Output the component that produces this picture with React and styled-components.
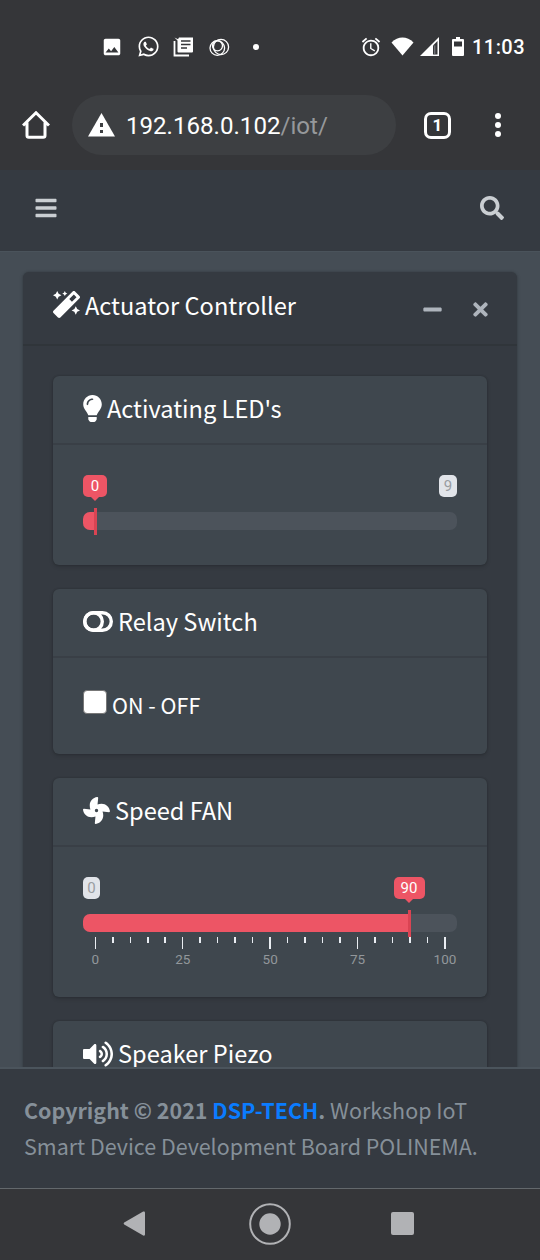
import React from "react";
import styled, { createGlobalStyle, css } from "styled-components";
import { FaBars, FaSearch, FaMinus, FaTimes, FaMagic, FaLightbulb, FaFan, FaVolumeUp, FaWhatsapp } from "react-icons/fa";
import { MdImage, MdAlarm } from "react-icons/md";

const GlobalStyle = createGlobalStyle`
  * { box-sizing: border-box; }
  body {
    margin: 0;
    background: #343a40;
    font-family: "Noto Sans CJK SC", "Noto Sans", sans-serif;
    color: #fff;
  }
  svg { display: block; flex: none; }
`;

const Screen = styled.div`
  width: 540px;
  height: 1260px;
  display: flex;
  flex-direction: column;
  overflow: hidden;
  background: #454d55;
`;

const StatusBar = styled.div`
  height: 95px;
  flex: none;
  display: flex;
  justify-content: space-between;
  align-items: center;
  padding: 0 15px 2px 101px;
  background: #353639;
`;

const Notifications = styled.div`
  display: flex;
  align-items: center;
  gap: 13.5px;
`;

const Dot = styled.i`
  width: 6px;
  height: 6px;
  margin-left: 9.5px;
  border-radius: 50%;
  background: #fff;
`;

const SystemIcons = styled.div`
  display: flex;
  align-items: center;
`;

const StatusIcon = styled.svg`
  margin-left: ${(p) => p.$gap}px;
`;

const Clock = styled.span`
  font: 500 20px/24px Roboto, sans-serif;
  letter-spacing: 0.45px;
  margin: 1px 0 0 8px;
`;

const AddressBar = styled.div`
  height: 75px;
  flex: none;
  display: flex;
  align-items: flex-start;
  padding-left: 22px;
  background: #353639;
`;

const BarIcon = styled.div`
  height: 60px;
  display: flex;
  align-items: center;
  margin-left: ${(p) => p.$gap || 0}px;
`;

const UrlField = styled.div`
  width: 324px;
  height: 60px;
  margin-left: 22px;
  padding-left: 16px;
  display: flex;
  align-items: center;
  border-radius: 30px;
  background: #3d3f42;
`;

const Url = styled.span`
  font: 400 24.1px/30px Roboto, sans-serif;
  margin: 2px 0 0 11px;
  white-space: nowrap;
  span { color: #96989b; }
`;

const TabCount = styled.div`
  width: 27px;
  height: 27px;
  border: 3px solid #fff;
  border-radius: 7px;
  display: flex;
  align-items: center;
  justify-content: center;
  font: 700 17px/20px Roboto, sans-serif;
`;

const Navbar = styled.nav`
  height: 82px;
  flex: none;
  display: flex;
  justify-content: space-between;
  align-items: flex-start;
  padding: 26px 36px 0 34px;
  color: #caced2;
  background: #353a41;
  border-bottom: 1px solid #4a535b;
`;

const Content = styled.main`
  flex: 1;
  min-height: 0;
  overflow: hidden;
  padding: 20px 23px 0;
`;

const OuterCard = styled.section`
  height: 900px;
  border-radius: 6px;
  background: #353a41;
  box-shadow: 0 0 2px rgba(0, 0, 0, 0.22), 0 1px 4px rgba(0, 0, 0, 0.15);
`;

const OuterHeader = styled.header`
  height: 74px;
  display: flex;
  justify-content: space-between;
  padding: 0 26px 0 30px;
  border-bottom: 2px solid #30353a;
`;

const Title = styled.h3`
  margin: 0;
  display: flex;
  height: 36px;
  font-size: 23.6px;
  font-weight: 400;
  line-height: 37px;
  white-space: nowrap;
  svg { margin-top: ${(p) => p.$iconTop || 0}px; margin-right: 5px; }
`;

const OuterTitle = styled(Title)`
  margin-top: 15px;
`;

const BulbIcon = styled(FaLightbulb)`
  width: 19px;
  height: 27px;
`;

const Tools = styled.div`
  display: flex;
  gap: 27px;
  color: #aeb4bc;
  padding-top: 27px;
`;

const CardList = styled.div`
  display: flex;
  flex-direction: column;
  gap: 24px;
  padding: 30px;
`;

const InnerCard = styled.article`
  height: ${(p) => p.$height}px;
  flex: none;
  border-radius: 6px;
  background: #3f474e;
  box-shadow: 0 0 2px rgba(0, 0, 0, 0.24), 0 2px 4px rgba(0, 0, 0, 0.14);
`;

const InnerHeader = styled.header`
  height: 69px;
  padding: 14px 30px 0;
  border-bottom: 2px solid #393f46;
`;

const CardBody = styled.div`
  padding: 30px;
`;

const Slider = styled.div`
  position: relative;
  padding-top: 37px;
`;

const Track = styled.div`
  height: 18px;
  border-radius: 7px;
  overflow: hidden;
  background: #4c535b;
`;

const Fill = styled.div`
  height: 18px;
  background: #ed5565;
`;

const Handle = styled.i`
  position: absolute;
  top: 33px;
  width: 3px;
  height: 27px;
  margin-left: -1px;
  background: #da4453;
`;

const tag = css`
  position: absolute;
  top: 0;
  height: 22px;
  border-radius: 5px;
  text-align: center;
  font: 400 15px/22px Roboto, sans-serif;
`;

const LimitTag = styled.span`
  ${tag}
  ${(p) => p.$side}: 0;
  width: ${(p) => (p.$side === "left" ? 17 : 18)}px;
  color: #999da1;
  background: #e1e4e9;
`;

const ValueTag = styled.span`
  ${tag}
  width: ${(p) => p.$width}px;
  margin-left: ${(p) => -p.$width / 2}px;
  color: #fff;
  background: #ed5565;
  &::after {
    content: "";
    position: absolute;
    top: 21px;
    left: 50%;
    margin-left: -5px;
    border: 5px solid transparent;
    border-bottom: 0;
    border-top-color: #ed5565;
  }
`;

const Ruler = styled.div`
  display: flex;
  justify-content: space-between;
  padding: 5px 12px 0 12.3px;
`;

const Tick = styled.div`
  width: 0;
  display: flex;
  flex-direction: column;
  align-items: center;
  font: 400 13.5px/16px Roboto, sans-serif;
  color: #92979b;
  &::before {
    content: "";
    flex: none;
    width: 1.5px;
    height: ${(p) => (p.$major ? 12 : 6)}px;
    margin-bottom: 2px;
    background: #e9edf2;
  }
`;

const CheckRow = styled.label`
  display: flex;
  height: 36px;
  font-size: 21.5px;
  line-height: 34px;
`;

const CheckBox = styled.input`
  appearance: none;
  width: 24px;
  height: 24px;
  margin: 2px 5px 0 0;
  border: 1.5px solid #777;
  border-radius: 4px;
  background: #fff;
`;

const Footer = styled.footer`
  height: 122px;
  flex: none;
  padding: 23px 24px 0;
  border-top: 2px solid #4b545c;
  border-bottom: 1px solid #63686c;
  background: #353a41;
  color: #869099;
  font-size: 21.46px;
  line-height: 36px;
`;

const FooterLine = styled.div`
  white-space: nowrap;
  b { font-weight: 700; }
  a { color: #0a7cff; }
`;

const SystemNav = styled.div`
  height: 71px;
  flex: none;
  display: flex;
  align-items: center;
  padding: 0 0 2px 123px;
  background: #353639;
`;

const SystemButton = styled.div`
  margin-right: ${(p) => p.$after || 0}px;
`;

function NewsIcon() {
  return (
    <svg width="21" height="20" viewBox="0 0 21 20">
      <path d="M1.5 4V18.5H16" fill="none" stroke="#fff" strokeWidth="1.8" />
      <path d="M1.5 0.5L5 2.2 6 0.5H20V14.5a1 1 0 0 1-1 1H5.5a1 1 0 0 1-1-1V3.4z" fill="#fff" />
      <path d="M8 4h9.5M8 7.5h9.5M8 11h6" stroke="#353639" strokeWidth="1.3" />
    </svg>
  );
}

function RingsIcon() {
  return (
    <svg width="22" height="20" viewBox="0 0 22 20" fill="none" stroke="#fff" strokeWidth="1.3">
      <circle cx="9.3" cy="11" r="7.3" />
      <circle cx="13" cy="10" r="7.6" />
      <circle cx="9.5" cy="8.8" r="5" />
    </svg>
  );
}

function ToggleIcon() {
  return (
    <svg width="30" height="21" viewBox="0 0 30 21" fill="none" stroke="#fff" strokeWidth="3.4">
      <rect x="1.7" y="1.7" width="26.6" height="17.6" rx="8.8" />
      <circle cx="10.5" cy="10.5" r="8.8" />
    </svg>
  );
}

const FAN_TICKS = Array.from({ length: 21 }, (_, i) => i * 5);

function RangeSlider({ value, tagWidth, offset, limit, side, ticks }) {
  return (
    <Slider>
      <Track><Fill style={{ width: offset }} /></Track>
      <Handle style={{ left: offset }} />
      <LimitTag $side={side}>{limit}</LimitTag>
      <ValueTag $width={tagWidth} style={{ left: offset }}>{value}</ValueTag>
      {ticks && (
        <Ruler>
          {ticks.map((t) => (
            <Tick key={t} $major={t % 25 === 0}>{t % 25 === 0 ? t : null}</Tick>
          ))}
        </Ruler>
      )}
    </Slider>
  );
}

export default function App() {
  return (
    <Screen>
      <GlobalStyle />
      <StatusBar>
        <Notifications>
          <MdImage size={22} />
          <FaWhatsapp size={23} />
          <NewsIcon />
          <RingsIcon />
          <Dot />
        </Notifications>
        <SystemIcons>
          <MdAlarm size={22} />
          <StatusIcon $gap={9} width="23" height="19" viewBox="0 0 23 19">
            <path d="M0.5 5.5C7-1.3 16-1.3 22.5 5.5L11.5 18.5z" fill="#fff" />
          </StatusIcon>
          <StatusIcon $gap={6} width="20" height="19" viewBox="0 0 20 19">
            <path d="M0 19L19 0V19z" fill="#fff" />
            <path d="M13 8.5L17.5 4V17.5H13z" fill="#353639" />
            <path d="M14.8 8.5V17.5" stroke="#85868a" strokeWidth="1" />
          </StatusIcon>
          <StatusIcon $gap={12} width="12" height="19" viewBox="0 0 12 19">
            <path d="M4 0h4v2h3a1 1 0 0 1 1 1v15a1 1 0 0 1-1 1H1a1 1 0 0 1-1-1V3a1 1 0 0 1 1-1h3z" fill="#fff" />
            <path d="M2 4.5h8v5H2z" fill="#353639" />
          </StatusIcon>
          <Clock>11:03</Clock>
        </SystemIcons>
      </StatusBar>
      <AddressBar>
        <BarIcon>
          <svg width="28" height="28" viewBox="0 0 28 28" fill="none" stroke="#fff" strokeWidth="3">
            <path d="M1 14.5L14 1.8L27 14.5M5 11.5V24.5Q5 26.3 6.8 26.3H21.2Q23 26.3 23 24.5V11.5" />
          </svg>
        </BarIcon>
        <UrlField>
          <svg width="27" height="24" viewBox="0 0 27 24">
            <path d="M13.5 0L27 23.5H0z" fill="#fff" />
            <path d="M12 10h3v4h-3zM12 17h3v3h-3z" fill="#3d3f42" />
          </svg>
          <Url>192.168.0.102<span>/iot/</span></Url>
        </UrlField>
        <BarIcon $gap={28}><TabCount>1</TabCount></BarIcon>
        <BarIcon $gap={44}>
          <svg width="6" height="26" viewBox="0 0 6 26" fill="#fff">
            <circle cx="3" cy="4" r="3" /><circle cx="3" cy="13" r="3" /><circle cx="3" cy="22" r="3" />
          </svg>
        </BarIcon>
      </AddressBar>
      <Navbar>
        <FaBars size={24} />
        <FaSearch size={24} />
      </Navbar>
      <Content>
        <OuterCard>
          <OuterHeader>
            <OuterTitle $iconTop={4}>
              <FaMagic size={27} />Actuator Controller
            </OuterTitle>
            <Tools>
              <FaMinus size={21} />
              <FaTimes size={21} />
            </Tools>
          </OuterHeader>
          <CardList>
            <InnerCard $height={189}>
              <InnerHeader>
                <Title $iconTop={5}><BulbIcon />Activating LED's</Title>
              </InnerHeader>
              <CardBody>
                <RangeSlider value={0} tagWidth={24} offset="12px" limit={9} side="right" />
              </CardBody>
            </InnerCard>
            <InnerCard $height={165}>
              <InnerHeader>
                <Title $iconTop={8}><ToggleIcon />Relay Switch</Title>
              </InnerHeader>
              <CardBody>
                <CheckRow><CheckBox type="checkbox" />ON - OFF</CheckRow>
              </CardBody>
            </InnerCard>
            <InnerCard $height={219}>
              <InnerHeader>
                <Title $iconTop={5}><FaFan size={27} />Speed FAN</Title>
              </InnerHeader>
              <CardBody>
                <RangeSlider value={90} tagWidth={31} offset="326px" limit={0} side="left" ticks={FAN_TICKS} />
              </CardBody>
            </InnerCard>
            <InnerCard $height={165}>
              <InnerHeader>
                <Title $iconTop={4}><FaVolumeUp size={30} height={27} />Speaker Piezo</Title>
              </InnerHeader>
            </InnerCard>
          </CardList>
        </OuterCard>
      </Content>
      <Footer>
        <FooterLine><b>Copyright © 2021 <a>DSP-TECH</a>.</b> Workshop IoT</FooterLine>
        <FooterLine>Smart Device Development Board POLINEMA.</FooterLine>
      </Footer>
      <SystemNav>
        <SystemButton $after={103.5}>
          <svg width="22" height="25" viewBox="0 0 22 25" fill="#b1b2b5">
            <path d="M1.2 11.6L20.2 .5Q22 0 22 1.5V23.5Q22 25 20.2 24.5L1.2 13.4Q0 12.5 1.2 11.6z" />
          </svg>
        </SystemButton>
        <SystemButton $after={100.5}>
          <svg width="42" height="42" viewBox="0 0 42 42">
            <circle cx="21" cy="21" r="19.8" fill="none" stroke="#b1b2b5" strokeWidth="2" />
            <circle cx="21" cy="21" r="10.7" fill="#b1b2b5" />
          </svg>
        </SystemButton>
        <SystemButton>
          <svg width="23" height="23"><rect width="23" height="23" rx="2" fill="#b1b2b5" /></svg>
        </SystemButton>
      </SystemNav>
    </Screen>
  );
}
